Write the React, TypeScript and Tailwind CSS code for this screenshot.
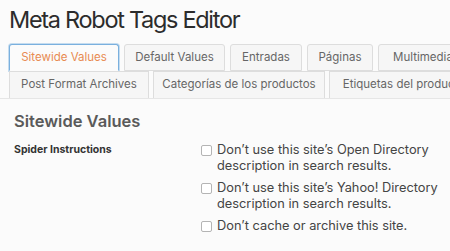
const rowOne = [
  { label: 'Sitewide Values', w: 'w-[110px]', active: true },
  { label: 'Default Values', w: 'w-[101px]' },
  { label: 'Entradas', w: 'w-[72px]' },
  { label: 'Páginas', w: 'w-[66px]' },
  { label: 'Multimedia', w: 'w-[90px]' },
];

const rowTwo = [
  { label: 'Post Format Archives', w: 'w-[140px]' },
  { label: 'Categorías de los productos', w: 'w-[172px]' },
  { label: 'Etiquetas del producto', w: 'w-[150px]' },
];

const options = [
  ['Don’t use this site’s Open Directory', 'description in search results.'],
  ['Don’t use this site’s Yahoo! Directory', 'description in search results.'],
  ['Don’t cache or archive this site.'],
];

export default function App() {
  return (
    <div className="w-[450px] h-[251px] overflow-hidden bg-[#fbfbfb] text-[#444] font-['Inter','Liberation_Sans',sans-serif]">
      <h1 className="pl-[9px] pt-[5px] text-[23.5px] leading-[30px] tracking-[-1.3px] text-[#2c2c2c]">
        Meta Robot Tags Editor
      </h1>

      <div className="mt-[9px] flex flex-col">
        <div className="flex gap-[5px] pl-[9px] whitespace-nowrap">
          {rowOne.map((t) => (
            <div
              key={t.label}
              className={`${t.w} shrink-0 h-[27px] flex items-center justify-center text-[11.5px] rounded-t-[3px] border ${
                t.active
                  ? 'border-[#7ab0de] border-b-transparent bg-[#fbfbfb] text-[#e88b52] ring-1 ring-[#c5dcef]'
                  : 'border-[#dddddd] bg-[#f6f6f6] text-[#666]'
              }`}
            >
              {t.label}
            </div>
          ))}
        </div>
        <div className="flex gap-[4px] pl-[9px] whitespace-nowrap border-b border-[#e6e6e6]">
          {rowTwo.map((t) => (
            <div
              key={t.label}
              className={`${t.w} shrink-0 h-[27px] flex items-center justify-center text-[11.5px] border border-b-0 border-[#dddddd] bg-[#f6f6f6] text-[#666]`}
            >
              {t.label}
            </div>
          ))}
        </div>
      </div>

      <h2 className="pl-[14px] mt-[10px] text-[16.5px] leading-[24px] font-semibold text-[#5a5a5a]">
        Sitewide Values
      </h2>

      <div className="flex mt-[9px] pl-[14px]">
        <div className="w-[187px] shrink-0 text-[10.5px] font-bold text-[#333] leading-[16px]">
          Spider Instructions
        </div>
        <div className="flex flex-col gap-[7px]">
          {options.map((lines, i) => (
            <label key={i} className="flex items-start gap-[5px] text-[12.8px] leading-[15.5px] text-[#444]">
              <span className="mt-[3px] w-[11px] h-[11px] shrink-0 rounded-[2px] border border-[#b4b4b4] bg-white" />
              <span>
                {lines.map((l, j) => (
                  <span key={j} className="block whitespace-nowrap">
                    {l}
                  </span>
                ))}
              </span>
            </label>
          ))}
        </div>
      </div>
    </div>
  );
}
